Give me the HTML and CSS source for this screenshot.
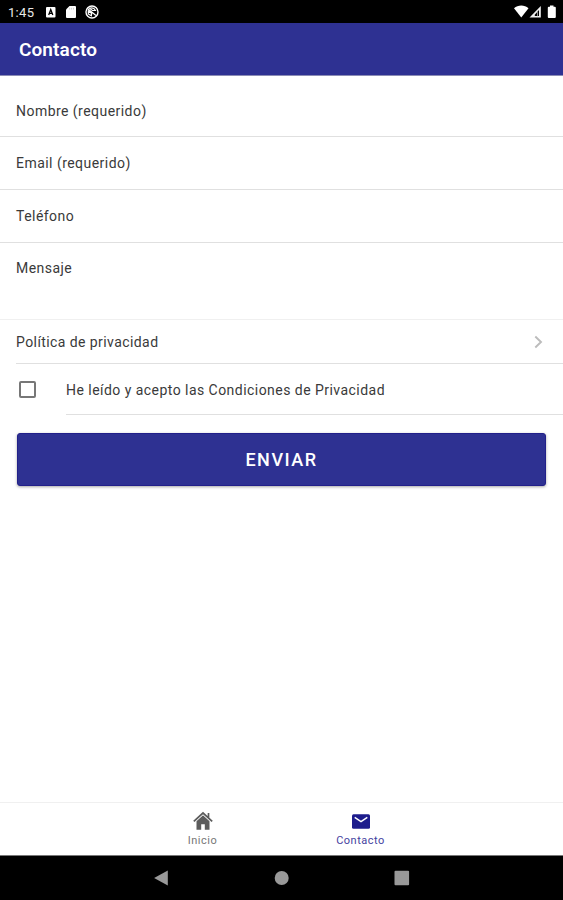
FILE: index.html
```
<!DOCTYPE html>
<html lang="es">
<head>
  <meta charset="UTF-8">
  <meta name="viewport" content="width=device-width, initial-scale=1.0">
  <title>Contacto</title>
  <link rel="stylesheet" href="styles.css">
</head>
<body>
  <div class="status-bar">
    <span class="time">1:45</span>
    <svg class="status-icon" width="12" height="12" viewBox="0 0 12 12">
      <rect x="1" y="1" width="9.5" height="10.5" rx="1" fill="#fff"/>
      <path d="M3.7 9 5.75 3.6 7.8 9M4.4 7.4h2.7" fill="none" stroke="#000" stroke-width="1.3"/>
    </svg>
    <svg class="status-icon" width="12" height="12" viewBox="0 0 12 12">
      <path d="M4.5 0H10a1 1 0 0 1 1 1v10a1 1 0 0 1-1 1H2a1 1 0 0 1-1-1V3.5z" fill="#fff"/>
      <path d="M4.7 1.8v1.8M6.6 1.8v1.8M8.5 1.8v1.8" stroke="#bbb" stroke-width=".7"/>
    </svg>
    <svg class="status-icon" width="14" height="14" viewBox="0 0 14 14">
      <circle cx="7" cy="7" r="6" fill="none" stroke="#fff" stroke-width="1.4"/>
      <path d="M3 4 11 10.500M4.500 3.300c3-1 5 .2 6 2.200L7.500 5.500zM3.300 6v3l3 1.800.4-2.400z" fill="none" stroke="#fff" stroke-width="1.200"/>
    </svg>
    <div class="signal">
      <svg width="42" height="14" viewBox="0 0 42 14">
        <path d="M0 3.2C4-.4 10.500-.4 14.500 3.200L7.250 12.600z" fill="#fff"/>
        <path d="M26.800 1v11.500H15.500z" fill="#eee"/>
        <path d="M25 5v6h-4.200v-1.300z" fill="#000"/>
        <path d="M23.500 6.500v4.800" stroke="#aaa" stroke-width=".8"/>
        <path d="M36 .5h3.500v1.200h1.300a1 1 0 0 1 1 1V12a1 1 0 0 1-1 1h-6a1 1 0 0 1-1-1V2.700a1 1 0 0 1 1-1H36z" fill="#fff"/>
      </svg>
    </div>
  </div>

  <header class="header">
    <h1 class="title">Contacto</h1>
  </header>

  <main class="content">
    <form>
      <label class="item field">Nombre (requerido)</label>
      <label class="item field">Email (requerido)</label>
      <label class="item field">Teléfono</label>
      <label class="item message">Mensaje</label>
      <div class="item policy">
        <span>Política de privacidad</span>
        <svg width="9" height="14" viewBox="0 0 9 14">
          <path d="M1.300 1.500 7 7l-5.700 5.500" fill="none" stroke="#bcbcbc" stroke-width="1.900"/>
        </svg>
      </div>
      <div class="item accept">
        <span class="checkbox"></span>
        <span class="accept-text">He leído y acepto las Condiciones de Privacidad</span>
      </div>
      <button type="button" class="send">Enviar</button>
    </form>
  </main>

  <nav class="tabs">
    <a class="tab">
      <svg width="20" height="20" viewBox="0 0 20 20">
        <path d="M10 4.300 16.500 10v8.700h-4.700v-5.500H8.200v5.500H3.500V10z" fill="#5c5c5c"/>
        <path d="M.8 10.300 10 2l9.200 8.300M15.500 2v5" fill="none" stroke="#5c5c5c" stroke-width="1.700"/>
        <path d="M2.200 11 10 4l7.800 7" fill="none" stroke="#ddd" stroke-width=".6"/>
      </svg>
      <span>Inicio</span>
    </a>
    <a class="tab active">
      <svg width="20" height="20" viewBox="0 0 20 20">
        <rect x="1" y="3.200" width="18" height="14.500" rx="1.500" fill="#1d1c8c"/>
        <path d="M3.700 6.300 10 10.500l6.300-4.200" fill="none" stroke="#fff" stroke-width="1.500"/>
      </svg>
      <span>Contacto</span>
    </a>
  </nav>

  <div class="nav-bar">
    <svg width="16" height="16" viewBox="0 0 16 16"><path d="M13.800.5v15L.1 8z" fill="#999"/></svg>
    <svg width="16" height="16" viewBox="0 0 16 16"><circle cx="7.700" cy="8" r="7" fill="#999"/></svg>
    <svg width="16" height="16" viewBox="0 0 16 16"><rect x=".5" y=".7" width="14.600" height="14.600" rx="1" fill="#999"/></svg>
  </div>
</body>
</html>
```

FILE: styles.css
```
* {
  box-sizing: border-box;
}

body {
  margin: 0;
  height: 100vh;
  display: flex;
  flex-direction: column;
  background: #fff;
  color: #3a3a3a;
  font-family: Roboto, sans-serif;
  font-size: 14px;
  overflow: hidden;
}

/* Barra de estado de Android */
.status-bar {
  height: 23px;
  display: flex;
  align-items: center;
  padding: 1px 7px 0 8px;
  background: #000;
  color: #e8e8e8;
}

.time {
  width: 37px;
  font-size: 13px;
  letter-spacing: 0.3px;
}

.status-icon {
  margin-right: 8px;
}

.signal {
  margin-left: auto;
  height: 14px;
}

.header {
  height: 53px;
  display: flex;
  align-items: center;
  padding: 0 19px;
  background: #2e3192;
  border-bottom: 1px solid #8b8cb5;
  color: #fff;
}

.title {
  margin: 0;
  font-size: 19px;
  font-weight: 600;
  letter-spacing: 0.1px;
}

.content {
  flex: 1;
  padding-top: 8px;
}

.item {
  display: flex;
  align-items: center;
  letter-spacing: 0.46px;
  border-bottom: 1px solid #e0e0e0;
}

.field {
  height: 53px;
  padding: 0 16px 1px;
}

.field:first-child {
  padding: 1px 16px 0;
}

.message {
  height: 77px;
  align-items: flex-start;
  padding: 17px 16px 0;
  border-bottom-color: #f0f0f0;
}

.policy {
  height: 44px;
  margin-left: 16px;
  padding-right: 20px;
  justify-content: space-between;
  letter-spacing: 0.42px;
}

.accept {
  height: 51px;
  padding-left: 19px;
  border: none;
}

.checkbox {
  width: 17px;
  height: 17px;
  border: 2px solid #777;
  border-radius: 2px;
}

.accept-text {
  flex: 1;
  align-self: stretch;
  display: flex;
  align-items: center;
  margin-left: 30px;
  padding-top: 2px;
  border-bottom: 1px solid #e0e0e0;
}

.send {
  display: block;
  width: 529px;
  height: 53px;
  margin: 18px 17px 0;
  border: 1px solid #22208a;
  border-radius: 3px;
  background: #2e3192;
  box-shadow: 0 1px 3px rgba(0, 0, 0, 0.35);
  color: #fff;
  font-family: inherit;
  font-size: 18px;
  font-weight: 500;
  letter-spacing: 1.5px;
  text-transform: uppercase;
}

/* Pestañas inferiores */
.tabs {
  height: 53px;
  display: flex;
  justify-content: center;
  border-top: 1px solid #f0f0f0;
}

.tab {
  width: 158px;
  display: flex;
  flex-direction: column;
  align-items: center;
  gap: 1px;
  padding-top: 8px;
  color: #777;
  font-size: 11px;
  line-height: 18px;
  letter-spacing: 0.5px;
}

.tab.active {
  color: #4442a0;
}

.nav-bar {
  height: 45px;
  display: flex;
  align-items: center;
  justify-content: center;
  gap: 104px;
  border-top: 1px solid #777;
  background: #000;
}
```
